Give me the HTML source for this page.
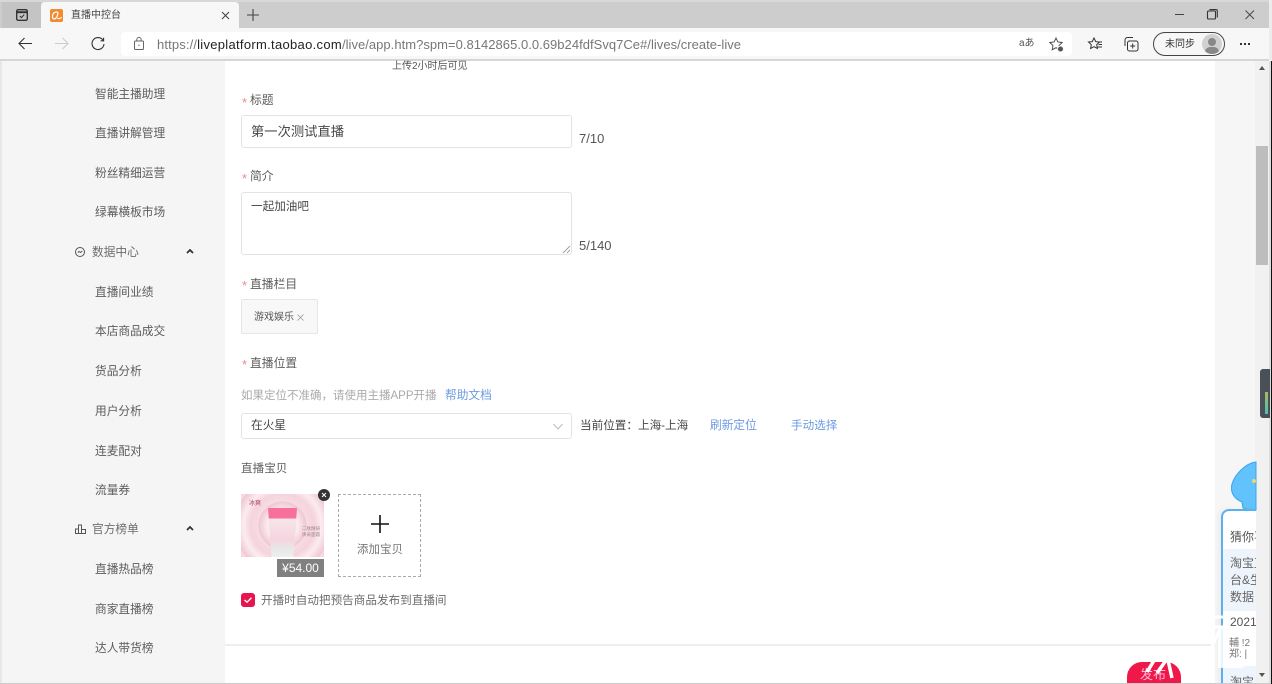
<!DOCTYPE html>
<html lang="zh"><head><meta charset="utf-8"><title>直播中控台</title>
<style>
*{box-sizing:border-box}
html,body{margin:0;padding:0;width:1272px;height:684px;overflow:hidden;background:#fff;font-family:"Liberation Sans","Noto Sans CJK SC",sans-serif;color:#555}
.a{position:absolute;white-space:nowrap}
.nav{left:95px;font-size:11.7px;line-height:16px;color:#5c5c5c}
.nav2{left:92px;font-size:11.7px;line-height:16px;color:#6c6c6c}
.lab{left:250px;font-size:11.8px;line-height:16px;color:#5c5c5c}
.req{left:242px;font-size:13px;line-height:16px;color:#e88}
.box{background:#fff;border:1px solid #e3e3e3;border-radius:3px}
svg{position:absolute;overflow:visible}
</style></head><body>
<!-- tab strip -->
<div class="a" style="left:0;top:0;width:1272px;height:28px;background:#cdcdcd;border-top:2px solid #d8d8d8"></div>
<div class="a" style="left:2px;top:2px;width:39px;height:26px;background:#c4c4c4"></div>
<div class="a" style="left:1269px;top:0;width:3px;height:60px;background:#ececec"></div>
<svg style="left:16px;top:9px" width="12" height="12" fill="none" stroke="#333" stroke-width="1.4"><rect x=".7" y=".7" width="10.6" height="10.6" rx="1.5"/><path d="M1 3.2h10" stroke-width="2"/><path d="M3.8 7l1.6 1.6 2.8-3" stroke-width="1"/></svg>
<div class="a" style="left:41px;top:2px;width:198px;height:27px;background:#f7f7f7;border-radius:4px 4px 0 0"></div>
<div class="a" style="left:50px;top:9px;width:13px;height:13px;background:#f28a2e;border-radius:2px"></div>
<svg style="left:50px;top:9px" width="13" height="13" fill="none" stroke="#fff" stroke-width="1.2"><path d="M6.5 3C3.5 3 2 6 2.5 8.5S6 10 7 7.5 8.500 3 6.500 3zM7.500 9c1 1 3 1 4-1"/></svg>
<div class="a" style="left:71px;top:9px;font-size:10px;line-height:14px;color:#444">直播中控台</div>
<svg style="left:221px;top:11px" width="9" height="9" stroke="#444" stroke-width="1.1"><path d="M1 1l7 7M8 1l-7 7"/></svg>
<svg style="left:247px;top:9px" width="12" height="12" stroke="#444" stroke-width="1.1"><path d="M6 0v12M0 6h12"/></svg>
<svg style="left:1175px;top:14px" width="9" height="2" stroke="#444"><path d="M0 .5h9"/></svg>
<svg style="left:1207px;top:9px" width="11" height="11" fill="none" stroke="#333" stroke-width="1.1"><rect x=".5" y="2" width="8" height="8" rx="1"/><path d="M2.500 .6h6.500a1.300 1.300 0 0 1 1.300 1.300V8.500"/></svg>
<svg style="left:1245px;top:10px" width="10" height="10" stroke="#444" stroke-width=".9"><path d="M.5.5l8.500 8.500M9 .5L.5 9"/></svg>
<!-- toolbar -->
<div class="a" style="left:0;top:28px;width:1269px;height:31px;background:#f7f7f7"></div>
<div class="a" style="left:121px;top:32px;width:951px;height:24px;background:#fff;border-radius:4px"></div>
<svg style="left:18px;top:37px" width="14" height="13" fill="none" stroke="#333" stroke-width="1.1"><path d="M14 6.500H1M6.500 1L1 6.500 6.500 12"/></svg>
<svg style="left:55px;top:37px" width="14" height="13" fill="none" stroke="#ccc" stroke-width="1.1"><path d="M0 6.500h13M7.500 1L13 6.500 7.500 12"/></svg>
<svg style="left:91px;top:37px" width="14" height="14" fill="none" stroke="#333" stroke-width="1.1"><path d="M12 3.200A6 6 0 1 0 13 7M12.600 .8v3h-3"/></svg>
<svg style="left:134px;top:37px" width="10" height="13" fill="none" stroke="#666"><rect x=".5" y="4" width="9" height="8.500" rx="1"/><path d="M2.800 4V2.600a2.200 2.200 0 0 1 4.400 0V4"/><path d="M5 7.600v1.400"/></svg>
<div class="a" style="left:157px;top:36px;font-size:13px;line-height:17px;color:#777;letter-spacing:.13px">https://<span style="color:#222;letter-spacing:.3px">liveplatform.taobao.com</span><span style="letter-spacing:.03px">/live/app.htm?spm=0.8142865.0.0.69b24fdfSvq7Ce#/lives/create-live</span></div>
<div class="a" style="left:1019px;top:37px;font-size:10px;line-height:14px;color:#555">aあ</div>
<svg style="left:1049px;top:37px" width="16" height="16" fill="none" stroke="#444" stroke-width=".9"><path d="M7 1l1.900 4 4.300 .5-3.200 3 .8 4.300L7 10.700 3.200 12.800 4 8.500 .8 5.500 5.100 5z"/><circle cx="11.500" cy="12" r="3" fill="#555" stroke="#f7f7f7"/></svg>
<svg style="left:1088px;top:37px" width="15" height="14" fill="none" stroke="#333" stroke-width="1"><path d="M6 1l1.700 3.600 3.800 .4-2.800 2.700 .7 3.800L6 9.700 2.600 11.500l.7-3.800L.5 5l3.800-.4z"/><path d="M10 5h4M10.500 7.500h3.500M9.500 10h4.500"/></svg>
<svg style="left:1124px;top:37px" width="15" height="15" fill="none" stroke="#333" stroke-width="1"><rect x="3.500" y="4" width="10.500" height="10" rx="2"/><path d="M1 9V3a2.500 2.500 0 0 1 2.500-2.500H9M8.700 6.500v5M6.200 9h5"/></svg>
<div class="a" style="left:1153px;top:32px;width:72px;height:24px;border:1px solid #444;border-radius:12px"></div>
<div class="a" style="left:1165px;top:38px;font-size:10px;line-height:14px;color:#333">未同步</div>
<div class="a" style="left:1202px;top:34px;width:20px;height:20px;border-radius:50%;background:#d0d0d0;overflow:hidden"><div class="a" style="left:6px;top:4px;width:8px;height:8px;border-radius:50%;background:#888"></div><div class="a" style="left:3px;top:13px;width:14px;height:10px;border-radius:7px;background:#888"></div></div>
<div class="a" style="left:1240px;top:43px;width:2px;height:2px;background:#333;box-shadow:4px 0 #333,8px 0 #333"></div>
<div class="a" style="left:0;top:59px;width:1269px;height:2px;background:#d6d6d6"></div>
<!-- page -->
<div class="a" style="left:0;top:61px;width:2px;height:623px;background:#e8e8e8"></div>
<div class="a" style="left:2px;top:61px;width:223px;height:623px;background:#f5f5f5"></div>
<div class="a" style="left:1215px;top:61px;width:40px;height:623px;background:#f6f6f6"></div>
<div class="a" style="left:1255px;top:61px;width:14px;height:623px;background:#f1f1f1"></div>
<div class="a" style="left:1256px;top:146px;width:12px;height:119px;background:#bdbdbd"></div>
<div class="a" style="left:1269px;top:61px;width:2px;height:623px;background:#ddd"></div>
<div class="a" style="left:1271px;top:61px;width:1px;height:623px;background:#111"></div>
<svg style="left:1259px;top:66px" width="6" height="4" fill="#555"><path d="M3 0l3 4H0z"/></svg>
<svg style="left:1259px;top:673px" width="6" height="4" fill="#555"><path d="M3 4l3-4H0z"/></svg>
<!-- sidebar -->
<div class="a nav" style="top:87px">智能主播助理</div>
<div class="a nav" style="top:126px">直播讲解管理</div>
<div class="a nav" style="top:166px">粉丝精细运营</div>
<div class="a nav" style="top:205px">绿幕横板市场</div>
<svg style="left:75px;top:247px" width="10" height="10" fill="none" stroke="#555"><circle cx="5" cy="5" r="4.500"/><path d="M2.800 5.500L4 4.500l1.500 1L7.300 4"/></svg>
<div class="a nav2" style="top:245px">数据中心</div>
<svg style="left:186px;top:249px" width="8" height="5" fill="none" stroke="#333" stroke-width="1.800"><path d="M1 4l3-3 3 3"/></svg>
<div class="a nav" style="top:285px">直播间业绩</div>
<div class="a nav" style="top:324px">本店商品成交</div>
<div class="a nav" style="top:364px">货品分析</div>
<div class="a nav" style="top:404px">用户分析</div>
<div class="a nav" style="top:444px">连麦配对</div>
<div class="a nav" style="top:483px">流量券</div>
<svg style="left:75px;top:524px" width="11" height="10" fill="none" stroke="#555"><path d="M.5 9.500V5h3V9.500M3.500 9.500V1h3v8.500M6.500 9.500V5.500h4v4zM0 9.500h11"/></svg>
<div class="a nav2" style="top:522px">官方榜单</div>
<svg style="left:186px;top:526px" width="8" height="5" fill="none" stroke="#333" stroke-width="1.800"><path d="M1 4l3-3 3 3"/></svg>
<div class="a nav" style="top:562px">直播热品榜</div>
<div class="a nav" style="top:602px">商家直播榜</div>
<div class="a nav" style="top:641px">达人带货榜</div>
<!-- form -->
<div class="a" style="left:392px;top:60px;font-size:10px;line-height:14px;color:#555">上传2小时后可见</div>
<div class="a req" style="top:95px">*</div><div class="a lab" style="top:92px">标题</div>
<div class="a box" style="left:241px;top:115px;width:331px;height:33px"></div>
<div class="a" style="left:251px;top:123px;font-size:13.300px;line-height:17px;color:#484848">第一次测试直播</div>
<div class="a" style="left:579px;top:131px;font-size:13px;line-height:16px;color:#555">7/10</div>
<div class="a req" style="top:171px">*</div><div class="a lab" style="top:168px">简介</div>
<div class="a box" style="left:241px;top:192px;width:331px;height:63px"></div>
<div class="a" style="left:251px;top:199px;font-size:11.600px;line-height:15px;color:#484848">一起加油吧</div>
<svg style="left:563px;top:246px" width="7" height="7" stroke="#888" stroke-width=".8"><path d="M0 7l7-7M4 7l3-3"/></svg>
<div class="a" style="left:579px;top:238px;font-size:13px;line-height:16px;color:#555">5/140</div>
<div class="a req" style="top:278px">*</div><div class="a lab" style="top:276px">直播栏目</div>
<div class="a" style="left:241px;top:299px;width:77px;height:35px;background:#f8f8f8;border:1px solid #e6e6e6;border-radius:2px"></div>
<div class="a" style="left:254px;top:311px;font-size:10px;line-height:14px;color:#555">游戏娱乐</div>
<svg style="left:297px;top:314px" width="7" height="7" stroke="#999" stroke-width=".8"><path d="M.5 .5l6 6M6.500 .5l-6 6"/></svg>
<div class="a req" style="top:357px">*</div><div class="a lab" style="top:355px">直播位置</div>
<div class="a" style="left:241px;top:388px;font-size:11.500px;line-height:16px;color:#aaa">如果定位不准确，请使用主播APP开播</div>
<div class="a" style="left:445px;top:388px;font-size:11.700px;line-height:16px;color:#6b9be0">帮助文档</div>
<div class="a box" style="left:241px;top:413px;width:331px;height:26px"></div>
<div class="a" style="left:251px;top:418px;font-size:11.700px;line-height:16px;color:#484848">在火星</div>
<svg style="left:553px;top:423px" width="10" height="7" fill="none" stroke="#bbb"><path d="M.5 1l4.500 5 4.500-5"/></svg>
<div class="a" style="left:580px;top:418px;font-size:11.600px;line-height:16px;color:#484848">当前位置：上海-上海</div>
<div class="a" style="left:710px;top:418px;font-size:11.700px;line-height:16px;color:#6b9be0">刷新定位</div>
<div class="a" style="left:791px;top:418px;font-size:11.600px;line-height:16px;color:#6b9be0">手动选择</div>
<div class="a" style="left:241px;top:461px;font-size:11.600px;line-height:16px;color:#5c5c5c">直播宝贝</div>
<!-- product -->
<div class="a" style="left:241px;top:494px;width:83px;height:63px;background:repeating-radial-gradient(circle at 50% 50%,#f7dbe3 0,#f5d3dd 8px,#fbecf0 15px,#efc6d2 24px)"></div>
<div class="a" style="left:268px;top:508px;width:29px;height:49px;background:linear-gradient(#f76f9b 0 10px,#f7e4ea 11px,#f5d5df 65%,#e6e6e6 80%,#eeeeee 100%);clip-path:polygon(0 0,100% 0,88% 100%,12% 100%)"></div>
<div class="a" style="left:249px;top:500px;font-size:6px;line-height:8px;color:#a8395a">冰爽</div>
<div class="a" style="left:302px;top:526px;font-size:4.500px;line-height:6px;color:#a08890">二肽精研<br>焕采面霜</div>
<div class="a" style="left:277px;top:559px;width:47px;height:18px;background:#808080;color:#fff;font-size:12px;line-height:18px;text-align:center">¥54.00</div>
<div class="a" style="left:318px;top:489px;width:12px;height:12px;border-radius:50%;background:#333"></div>
<svg style="left:321px;top:492px" width="6" height="6" stroke="#fff" stroke-width="1"><path d="M1 1l4 4M5 1L1 5"/></svg>
<div class="a" style="left:338px;top:494px;width:83px;height:83px;border:1px dashed #aaa"></div>
<svg style="left:371px;top:515px" width="18" height="18" stroke="#111" stroke-width="1.600"><path d="M9 0v18M0 9h18"/></svg>
<div class="a" style="left:357px;top:542px;font-size:11.500px;line-height:16px;color:#777">添加宝贝</div>
<div class="a" style="left:241px;top:593px;width:14px;height:14px;border-radius:3px;background:#e8134f"></div>
<svg style="left:244px;top:597px" width="8" height="6" fill="none" stroke="#fff" stroke-width="1.400"><path d="M.5 3l2.500 2.200L7.500 .8"/></svg>
<div class="a" style="left:261px;top:593px;font-size:11.600px;line-height:16px;color:#6c6c6c">开播时自动把预告商品发布到直播间</div>
<div class="a" style="left:225px;top:644px;width:990px;height:2px;background:#eee"></div>
<!-- publish button -->
<div class="a" style="left:1127px;top:662px;width:54px;height:22px;border-radius:15px 15px 0 0;background:#f01848"></div>
<div class="a" style="left:1140px;top:667px;font-size:13px;line-height:16px;color:#fbd">发布</div>
<svg style="left:1146px;top:658px" width="30" height="22" fill="none" stroke="#fff" stroke-width="3.500"><path d="M9 1L1 14M21 1L11 15M22 2l4 18"/></svg>
<!-- mascot -->
<svg style="left:1230px;top:462px" width="26" height="48"><path d="M26 0C16 1 5 12 2 22 0 30 4 37 12 40L13 46C16 48 22 48 26 48Z" fill="#62c2fb" stroke="#3aa4ec"/><circle cx="24" cy="19" r="2" fill="#f4d668"/></svg>
<!-- helper card -->
<div class="a" style="left:1221px;top:509px;width:35px;height:175px;background:#fff;border:2px solid #5cb0ee;border-right:0;border-bottom:0;border-radius:8px 0 0 0;overflow:hidden;box-shadow:-3px 0 6px rgba(0,0,0,.04)">
<div class="a" style="left:7px;top:18px;font-size:12px;line-height:16px;color:#555">猜你喜</div>
<div class="a" style="left:0;top:38px;width:33px;height:62px;background:#edf4fc"></div>
<div class="a" style="left:7px;top:44px;font-size:12px;line-height:17px;color:#666">淘宝直<br>台&amp;生<br>数据</div>
<div class="a" style="left:7px;top:103px;font-size:12px;line-height:16px;color:#555">2021</div>
<div class="a" style="left:0;top:155px;width:33px;height:20px;background:#edf4fc"></div>
<div class="a" style="left:7px;top:163px;font-size:12px;line-height:16px;color:#666">淘宝</div>
</div>
<div class="a" style="left:1218px;top:626px;width:25px;height:42px;background:#fff;opacity:.85"></div>
<div class="a" style="left:1229px;top:638px;font-size:10px;line-height:11px;color:#777">輔 !2<br>郑: |</div>
<svg style="left:1205px;top:615px" width="26" height="40" fill="none" stroke="#fff" stroke-width="3"><path d="M6 2h18M2 12h22M16 12L4 38"/></svg>
<div class="a" style="left:0;top:683px;width:1271px;height:1px;background:#ccc"></div>
<!-- side widget -->
<div class="a" style="left:1260px;top:369px;width:10px;height:49px;background:#4a5058;border-radius:3px 0 0 3px"></div>
<div class="a" style="left:1265px;top:392px;width:3px;height:22px;background:linear-gradient(#a8b860,#4cc0b0)"></div>
</body></html>
